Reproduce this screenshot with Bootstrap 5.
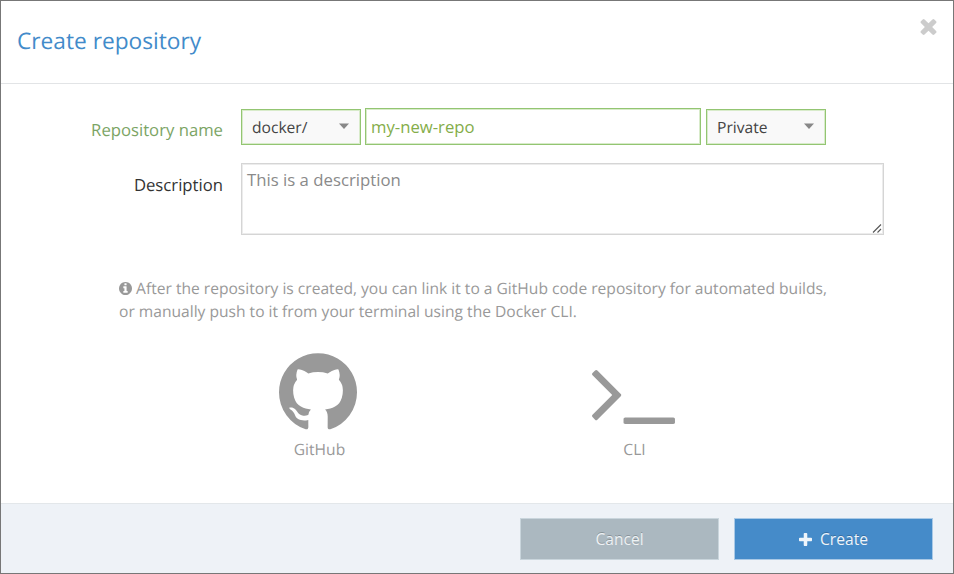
<!DOCTYPE html>
<html lang="en">
<head>
<meta charset="utf-8">
<meta name="viewport" content="width=device-width, initial-scale=1">
<title>Create repository</title>
<link href="https://cdn.jsdelivr.net/npm/bootstrap@5.3.0/dist/css/bootstrap.min.css" rel="stylesheet">
<style>
body { font-family: "Open Sans", sans-serif; font-size: 15.600px; color: #333; overflow: hidden; text-rendering: geometricPrecision; }
svg { display: block; fill: currentColor; }
.dialog-box { width: 954px; height: 574px; border: 1px solid #777; background: #fff; }
.dialog-head { height: 83px; padding: 0 16px; border-bottom: 1px solid #e2e4e6; }
.dialog-title { font-size: 22.700px; line-height: 30px; font-weight: 400; color: #428bca; margin: 25px 0 0; }
.dismiss { margin-top: 18px; color: #ccc; }
.dialog-main { padding: 24px 60px 0 0; }
.field-label { width: 222px; flex-shrink: 0; font-size: 16.700px; line-height: 24px; padding-top: 10px; }
.repo-label { color: #7ba464; }
.fields { margin-left: 18px; }
.desc-row { margin-top: 18px; }
.picker { width: 120px; height: 36px; margin-top: 1px; border: 1px solid #93c572; outline: 1px solid #d8ebca; outline-offset: -2px; background: #f9f9f9; color: #444; padding: 1px 11px 0 10px; }
.picker svg { color: #888; margin-top: -4px; }
.repo-input { width: 336px; height: 37px; border: 1px solid #93c572; outline: 1px solid #d8ebca !important; outline-offset: -2px; color: #84ad49 !important; padding: 0 5px; font-size: 16.700px; box-shadow: none !important; }
.visibility { margin-left: 1px; }
.desc-input { width: 643px; height: 72px; border: 1px solid #d5d5d5; outline: 1px solid #ececec; outline-offset: -2px; padding: 4px 5px; line-height: 24px; font-size: 16.750px; color: #8a8a8a; resize: none; overflow: hidden; }
.grip { right: 2px; bottom: 2px; }
.hint { margin: 42px 0 0 118px; line-height: 23px; color: #999; }
.hint svg { display: inline-block; vertical-align: -1px; }
.targets { margin: 29px 0 0 159px; color: #999; }
.target { width: 315px; }
.target-icon { height: 78px; }
.hub-icon { margin-top: 1px; }
.cli-icon { margin-top: 18px; margin-left: 2px; }
.target-name { line-height: 22px; margin-top: 8px; padding-left: 4px; }
.dialog-foot { height: 70px; background: #eef2f7; border-top: 1px solid #e3e7ea; padding: 14px 20px 0 0; gap: 15px; }
.action { width: 199px; height: 42px; border-radius: 0; font-size: 15.600px; text-shadow: 0 -1px 0 rgba(0,0,0,.22); padding: 2px 0 0; }
.action-cancel, .action-cancel:hover { background: #abb8c0; border-color: #c9d5dc; color: #eef2f4; }
.action-create, .action-create:hover { background: #458bc9; border-color: #a9c9e6; color: #eef5fb; }
.action svg { margin-top: -1px; }
</style>
</head>
<body>
<div class="dialog-box d-flex flex-column">
  <header class="dialog-head d-flex justify-content-between align-items-start flex-shrink-0">
    <h1 class="dialog-title">Create repository</h1>
    <button type="button" class="dismiss btn p-0 border-0" aria-label="Close">
      <svg width="17" height="16" viewBox="302 366 1188 1188"><path d="M1490 1322q0 40-28 68l-136 136q-28 28-68 28t-68-28l-294-294-294 294q-28 28-68 28t-68-28l-136-136q-28-28-28-68t28-68l294-294-294-294q-28-28-28-68t28-68l136-136q28-28 68-28t68 28l294 294 294-294q28-28 68-28t68 28l136 136q28 28 28 68t-28 68l-294 294 294 294q28 28 28 68z"/></svg>
    </button>
  </header>
  <main class="dialog-main flex-grow-1">
    <div class="d-flex">
      <label class="field-label repo-label text-end" for="repo">Repository name</label>
      <div class="d-flex fields">
        <div class="picker d-flex align-items-center justify-content-between" role="button"><span>docker/</span><svg width="10" height="6" viewBox="0 0 10 6"><path d="M0 .5h10L5 6z"/></svg></div>
        <input id="repo" class="repo-input form-control rounded-0 mx-1" value="my-new-repo">
        <div class="picker visibility d-flex align-items-center justify-content-between" role="button"><span>Private</span><svg width="10" height="6" viewBox="0 0 10 6"><path d="M0 .5h10L5 6z"/></svg></div>
      </div>
    </div>
    <div class="d-flex desc-row">
      <label class="field-label text-end" for="desc">Description</label>
      <div class="position-relative fields">
        <textarea id="desc" class="desc-input form-control rounded-0">This is a description</textarea>
        <svg class="grip position-absolute" width="10" height="9" viewBox="0 0 10 9"><path d="M1 8.500 9 .5M5.500 8.500 9 5" fill="none" stroke="#555" stroke-width="1.100"/></svg>
      </div>
    </div>
    <p class="hint"><svg width="13" height="13" viewBox="128 128 1536 1536"><path d="M1152 1376v-160q0-14-9-23t-23-9h-96v-512q0-14-9-23t-23-9h-320q-14 0-23 9t-9 23v160q0 14 9 23t23 9h96v320h-96q-14 0-23 9t-9 23v160q0 14 9 23t23 9h448q14 0 23-9t9-23zm-128-896v-160q0-14-9-23t-23-9h-192q-14 0-23 9t-9 23v160q0 14 9 23t23 9h192q14 0 23-9t9-23zm640 416q0 209-103 385.500t-279.500 279.500-385.500 103-385.500-103-279.500-279.500-103-385.500 103-385.500 279.500-279.500 385.500-103 385.500 103 279.500 279.500 103 385.500z"/></svg> After the repository is created, you can link it to a GitHub code repository for automated builds,<br>or manually push to it from your terminal using the Docker CLI.</p>
    <div class="targets d-flex text-center">
      <div class="target">
        <div class="target-icon d-flex justify-content-center"><svg class="hub-icon" width="78" height="77" viewBox="0 128 1536 1506"><path d="M768 128q209 0 385.500 103t279.500 279.500 103 385.500q0 251-146.500 451.500t-378.500 277.500q-27 5-40-7t-13-30q0-3 .5-76.500t.5-134.500q0-97-52-142 57-6 102.500-18t94-39 81-66.500 53-105 20.500-150.500q0-119-79-206 37-91-8-204-28-9-81 11t-92 44l-38 24q-93-26-192-26t-192 26q-16-11-42.500-27t-83.500-38.500-85-13.500q-45 113-8 204-79 87-79 206 0 85 20.500 150t52.500 105 80.500 67 94 39 102.500 18q-39 36-49 102-21 10-45 15t-57 5-65.500-21.500-55.500-62.500q-19-32-48.500-52t-49.500-24l-20-3q-21 0-29 4.500t-5 11.500 9 14 13 12l7 5q22 10 43.500 38t31.500 51l10 23q13 38 44 61.500t67 30 69.500 7 55.500-3.500l23-4q0 38 .5 88.500t.5 54.500q0 18-13 30t-40 7q-232-77-378.500-277.500t-146.500-451.500q0-209 103-385.500t279.500-279.500 385.500-103z"/></svg></div>
        <div class="target-name">GitHub</div>
      </div>
      <div class="target">
        <div class="target-icon d-flex justify-content-center align-items-start"><svg class="cli-icon" width="83" height="54" viewBox="13 461 1651 1075"><path d="M585 983l-466 466q-10 10-23 10t-23-10l-50-50q-10-10-10-23t10-23l393-393-393-393q-10-10-10-23t10-23l50-50q10-10 23-10t23 10l466 466q10 10 10 23t-10 23zm1079 457v64q0 14-9 23t-23 9h-960q-14 0-23-9t-9-23v-64q0-14 9-23t23-9h960q14 0 23 9t9 23z"/></svg></div>
        <div class="target-name">CLI</div>
      </div>
    </div>
  </main>
  <footer class="dialog-foot d-flex justify-content-end flex-shrink-0">
    <button type="button" class="action action-cancel btn">Cancel</button>
    <button type="button" class="action action-create btn d-flex align-items-center justify-content-center gap-2"><svg width="13" height="13" viewBox="192 128 1408 1408" fill="#fff"><path d="M1600 736v192q0 40-28 68t-68 28h-416v416q0 40-28 68t-68 28h-192q-40 0-68-28t-28-68v-416h-416q-40 0-68-28t-28-68v-192q0-40 28-68t68-28h416v-416q0-40 28-68t68-28h192q40 0 68 28t28 68v416h416q40 0 68 28t28 68z"/></svg>Create</button>
  </footer>
</div>
<script src="https://cdn.jsdelivr.net/npm/bootstrap@5.3.0/dist/js/bootstrap.bundle.min.js"></script>
</body>
</html>
